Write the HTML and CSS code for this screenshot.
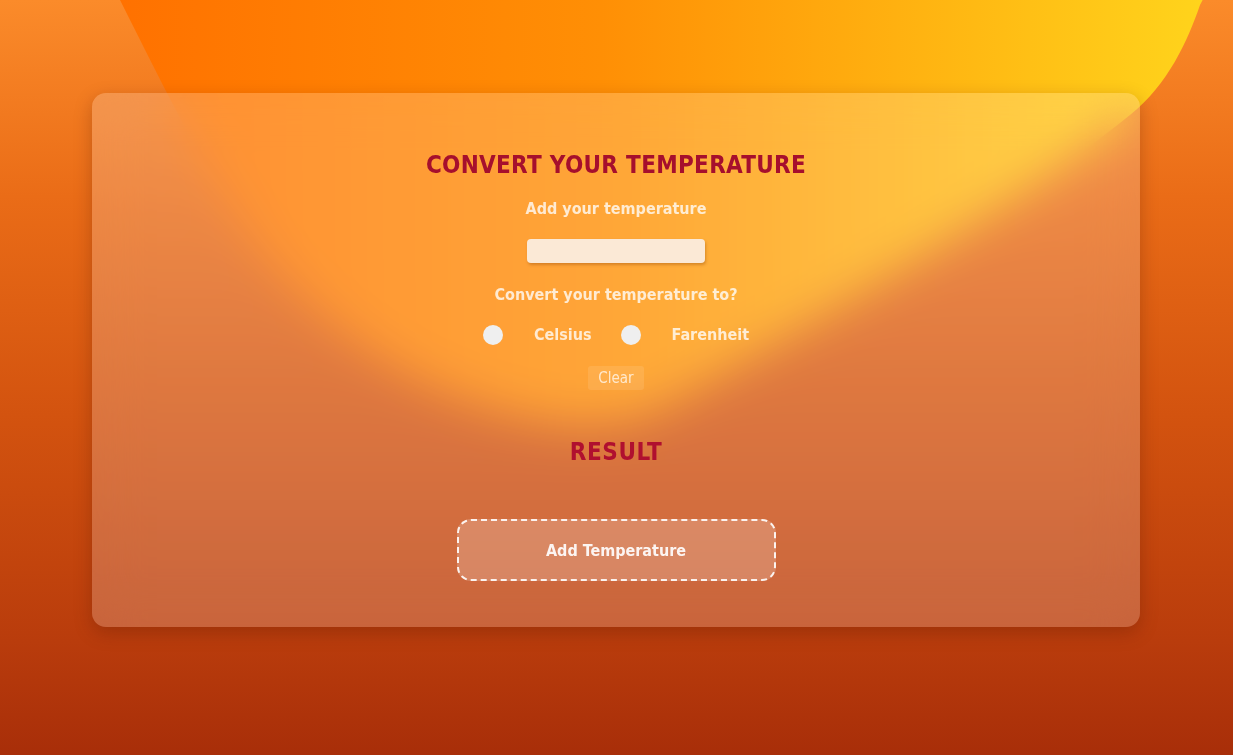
FILE: index.html
```html
<!DOCTYPE html>
<html lang="en">
<head>
<meta charset="utf-8">
<title>Temperature Converter</title>
<link rel="stylesheet" href="styles.css">
</head>
<body>
<svg class="blob" width="1233" height="755" viewBox="0 0 1233 755" aria-hidden="true">
  <defs>
    <linearGradient id="blobGrad" x1="0" y1="0" x2="1" y2="0">
      <stop offset="0" stop-color="#ff7000"/>
      <stop offset="0.45" stop-color="#ff8f05"/>
      <stop offset="1" stop-color="#ffd51c"/>
    </linearGradient>
  </defs>
  <path fill="url(#blobGrad)" d="M 100 -40 L 1215 -40 C 1212 -20 1208 -10 1200 5 C 1188 40 1168 85 1130 115 C 1020 205 800 330 660 410 C 630 424 590 428 560 424 C 440 410 330 340 260 250 C 210 180 170 100 120 0 Z"/>
</svg>
<main class="card">
  <h1 class="title">CONVERT YOUR TEMPERATURE</h1>
  <label class="label" for="temp">Add your temperature</label>
  <input class="temp-input" id="temp" type="text">
  <p class="label question">Convert your temperature to?</p>
  <div class="options">
    <span class="radio"></span><span class="label opt">Celsius</span>
    <span class="radio"></span><span class="label">Farenheit</span>
  </div>
  <button class="clear" type="button">Clear</button>
  <h2 class="title result">RESULT</h2>
  <div class="result-box">Add Temperature</div>
</main>
</body>
</html>
```
FILE: styles.css
```css
html, body {
  margin: 0;
  padding: 0;
}
body {
  width: 1233px;
  height: 755px;
  overflow: hidden;
  position: relative;
  font-family: "DejaVu Sans Condensed", "DejaVu Sans", sans-serif;
  background: linear-gradient(180deg, #fb8b2a 0%, #ea6c17 26%, #d3530f 55%, #b93c0c 85%, #a82e09 100%);
}
.blob {
  position: absolute;
  left: 0;
  top: 0;
  z-index: 0;
}
.card {
  position: relative;
  z-index: 1;
  box-sizing: border-box;
  width: 1048px;
  height: 534px;
  margin: 93px 0 0 92px;
  border-radius: 14px;
  background: rgba(255, 255, 255, 0.2);
  -webkit-backdrop-filter: blur(24px);
  backdrop-filter: blur(24px);
  box-shadow: 0 6px 18px rgba(80, 20, 0, 0.28);
  display: flex;
  flex-direction: column;
  align-items: center;
  padding-top: 57px;
}
.title {
  margin: 0;
  font-size: 24px;
  line-height: 30px;
  font-weight: bold;
  letter-spacing: 0.3px;
  color: #a60f2d;
}
.label {
  display: block;
  margin: 19px 0 0;
  font-size: 16px;
  line-height: 20px;
  font-weight: bold;
  color: rgba(255, 255, 255, 0.78);
}
.temp-input {
  box-sizing: border-box;
  width: 178px;
  height: 24px;
  margin: 20px 0 0;
  border: none;
  border-radius: 4px;
  background: #fbe9d6;
  box-shadow: 1px 2px 3px rgba(120, 50, 0, 0.3);
  outline: none;
}
.question {
  margin-top: 22px;
}
.options {
  display: flex;
  align-items: center;
  margin-top: 20px;
  height: 20px;
}
.options .label {
  margin: 0;
}
.radio {
  width: 20px;
  height: 20px;
  border-radius: 50%;
  background: #efefef;
  margin-right: 31px;
}
.opt {
  margin-right: 29px !important;
}
.clear {
  margin-top: 21px;
  height: 24px;
  padding: 0 10px;
  border: none;
  border-radius: 3px;
  background: rgba(255, 255, 255, 0.1);
  color: rgba(255, 255, 255, 0.72);
  font-family: "DejaVu Sans Condensed", "DejaVu Sans", sans-serif;
  font-size: 15px;
}
.result {
  margin-top: 47px;
  letter-spacing: 0.6px;
  color: #b0102f;
}
.result-box {
  box-sizing: border-box;
  width: 319px;
  height: 62px;
  margin-top: 52px;
  border: 2px dashed rgba(255, 255, 255, 0.9);
  border-radius: 14px;
  background: rgba(255, 255, 255, 0.2);
  display: flex;
  align-items: center;
  justify-content: center;
  font-size: 16px;
  font-weight: bold;
  color: rgba(255, 255, 255, 0.92);
}
```
